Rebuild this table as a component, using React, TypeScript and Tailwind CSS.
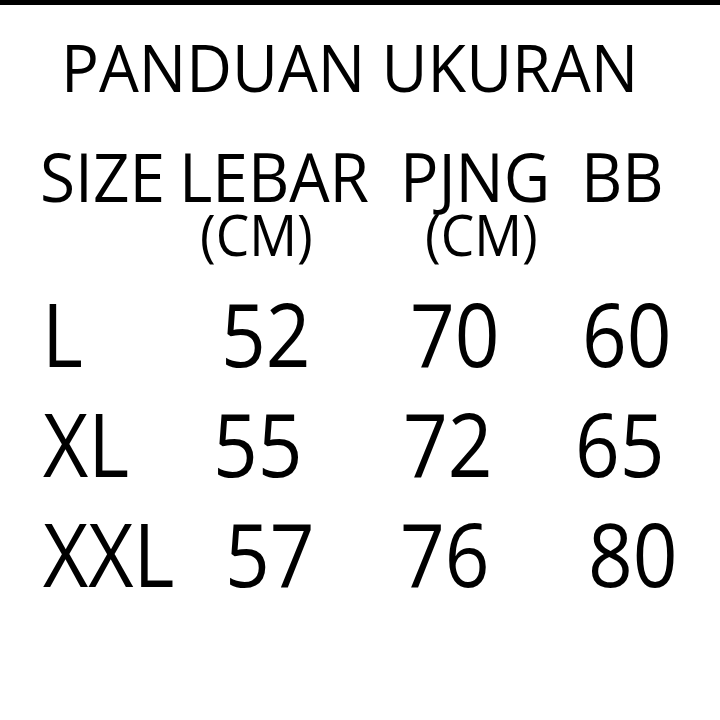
import React from "react";

type Cell = { text: string; x: number };

const header: Cell[] = [
  { text: "SIZE", x: 40 },
  { text: "LEBAR", x: 179 },
  { text: "PJNG", x: 400 },
  { text: "BB", x: 581 },
];

const units: Cell[] = [
  { text: "(CM)", x: 200 },
  { text: "(CM)", x: 425 },
];

const rows: Cell[][] = [
  [
    { text: "L", x: 42 },
    { text: "52", x: 221 },
    { text: "70", x: 410 },
    { text: "60", x: 582 },
  ],
  [
    { text: "XL", x: 43 },
    { text: "55", x: 213 },
    { text: "72", x: 403 },
    { text: "65", x: 575 },
  ],
  [
    { text: "XXL", x: 43 },
    { text: "57", x: 225 },
    { text: "76", x: 400 },
    { text: "80", x: 588 },
  ],
];

// one line of words, each starting at its own x
function Line({ cells, className, squeeze }: { cells: Cell[]; className: string; squeeze: string }) {
  return (
    <div className={`flex ${className}`}>
      {cells.map((c, i) => {
        const next = cells[i + 1];
        return (
          <div
            key={i}
            className="shrink-0 whitespace-nowrap"
            style={{ marginLeft: i === 0 ? c.x : 0, width: next ? next.x - c.x : undefined }}
          >
            <span className={`inline-block origin-left ${squeeze}`}>{c.text}</span>
          </div>
        );
      })}
    </div>
  );
}

export default function App() {
  return (
    <div className="w-[720px] h-[720px] bg-white text-black overflow-hidden font-['Open_Sans',sans-serif] font-medium">
      <div className="h-[5px] bg-black" />
      {/* title */}
      <div className="mt-[28px] pl-[61px] text-[66px] leading-none whitespace-nowrap">
        <span className="inline-block origin-left scale-x-[0.955]">PANDUAN UKURAN</span>
      </div>
      {/* column headings */}
      <Line cells={header} squeeze="scale-x-[0.94]" className="mt-[43px] text-[68px] leading-none" />
      <Line cells={units} squeeze="scale-x-[0.95]" className="-mt-[4px] text-[56px] leading-none" />
      {/* sizes */}
      <div className="mt-[28px] flex flex-col gap-[23px]">
        {rows.map((r, i) => (
          <Line key={i} cells={r} squeeze="scale-x-[0.9]" className="text-[87px] leading-none" />
        ))}
      </div>
    </div>
  );
}
